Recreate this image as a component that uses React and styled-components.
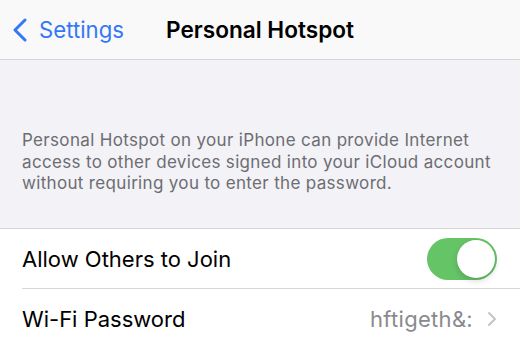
import styled, { createGlobalStyle } from "styled-components"

const Global = createGlobalStyle`
    html, body {
        margin: 0;
        padding: 0;
        background: #f2f2f7;
    }
    body {
        font-family: Inter, "Noto Sans", sans-serif;
        -webkit-font-smoothing: antialiased;
    }
`

const Screen = styled.div`
    width: 520px;
    height: 349px;
    overflow: hidden;
    background: #f2f2f7;
`

const NavBar = styled.header`
    height: 59px;
    background: #f9f9f9;
    border-bottom: 1px solid #d6d6d8;
    display: grid;
    grid-template-columns: 1fr auto 1fr;
    align-items: center;
`

const BackButton = styled.div`
    display: flex;
    align-items: center;
    gap: 11px;
    padding-left: 12px;
    color: #3478f6;
    font-size: 22.2px;
    svg{
        width: 16px;
        height: 24px;
    }
`

const Title = styled.h1`
    margin: 0;
    font-size: 22.6px;
    font-weight: 600;
    color: #000;
`

const Footnote = styled.p`
    margin: 0;
    padding: 70px 22px 33px;
    font-size: 17px;
    letter-spacing: 0.33px;
    line-height: 21.7px;
    color: #6d6d72;
`

const Group = styled.section`
    background: #fff;
    border-top: 1px solid #d6d6d8;
`

const Row = styled.div`
    height: 60px;
    margin-left: 22px;
    padding-right: 23px;
    display: flex;
    align-items: center;
    justify-content: space-between;
    border-bottom: ${p => (p.$last ? "none" : "1px solid #d6d6d8")};
    box-sizing: border-box;
`

const Label = styled.span`
    font-size: 22px;
    color: #000;
`

const Detail = styled.span`
    display: flex;
    align-items: center;
    gap: 13px;
    font-size: 22px;
    letter-spacing: 0.3px;
    color: #8a8a8e;
    svg{
        width: 11px;
        height: 16px;
    }
`

const Toggle = styled.div`
    position: relative;
    width: 70px;
    height: 42px;
    border-radius: 21px;
    background: ${p => (p.$on ? "#65c466" : "#e9e9eb")};
`

const Knob = styled.div`
    position: absolute;
    top: 2px;
    left: ${p => (p.$on ? "30px" : "2px")};
    width: 38px;
    height: 38px;
    border-radius: 50%;
    background: #fff;
    box-shadow: 0 3px 6px rgba(0, 0, 0, 0.15), 0 0 1px rgba(0, 0, 0, 0.1);
`

export default function App() {
    return (
        <Screen>
            <Global />
            <NavBar>
                <BackButton>
                    <svg viewBox="0 0 16 24" fill="none">
                        <path d="M13 2 L3 12 L13 22" stroke="#3478f6" strokeWidth="3" strokeLinecap="round" strokeLinejoin="round" />
                    </svg>
                    <span>Settings</span>
                </BackButton>
                <Title>Personal Hotspot</Title>
                <div />
            </NavBar>
            <Footnote>
                Personal Hotspot on your iPhone can provide Internet access to other devices signed into your iCloud account without requiring you to enter the password.
            </Footnote>
            <Group>
                <Row>
                    <Label>Allow Others to Join</Label>
                    <Toggle $on>
                        <Knob $on />
                    </Toggle>
                </Row>
                <Row $last>
                    <Label>Wi-Fi Password</Label>
                    <Detail>
                        hftigeth&amp;:
                        <svg viewBox="0 0 11 16" fill="none">
                            <path d="M3 2 L9 8 L3 14" stroke="#c4c4c7" strokeWidth="2" strokeLinecap="round" strokeLinejoin="round" />
                        </svg>
                    </Detail>
                </Row>
            </Group>
        </Screen>
    )
}
